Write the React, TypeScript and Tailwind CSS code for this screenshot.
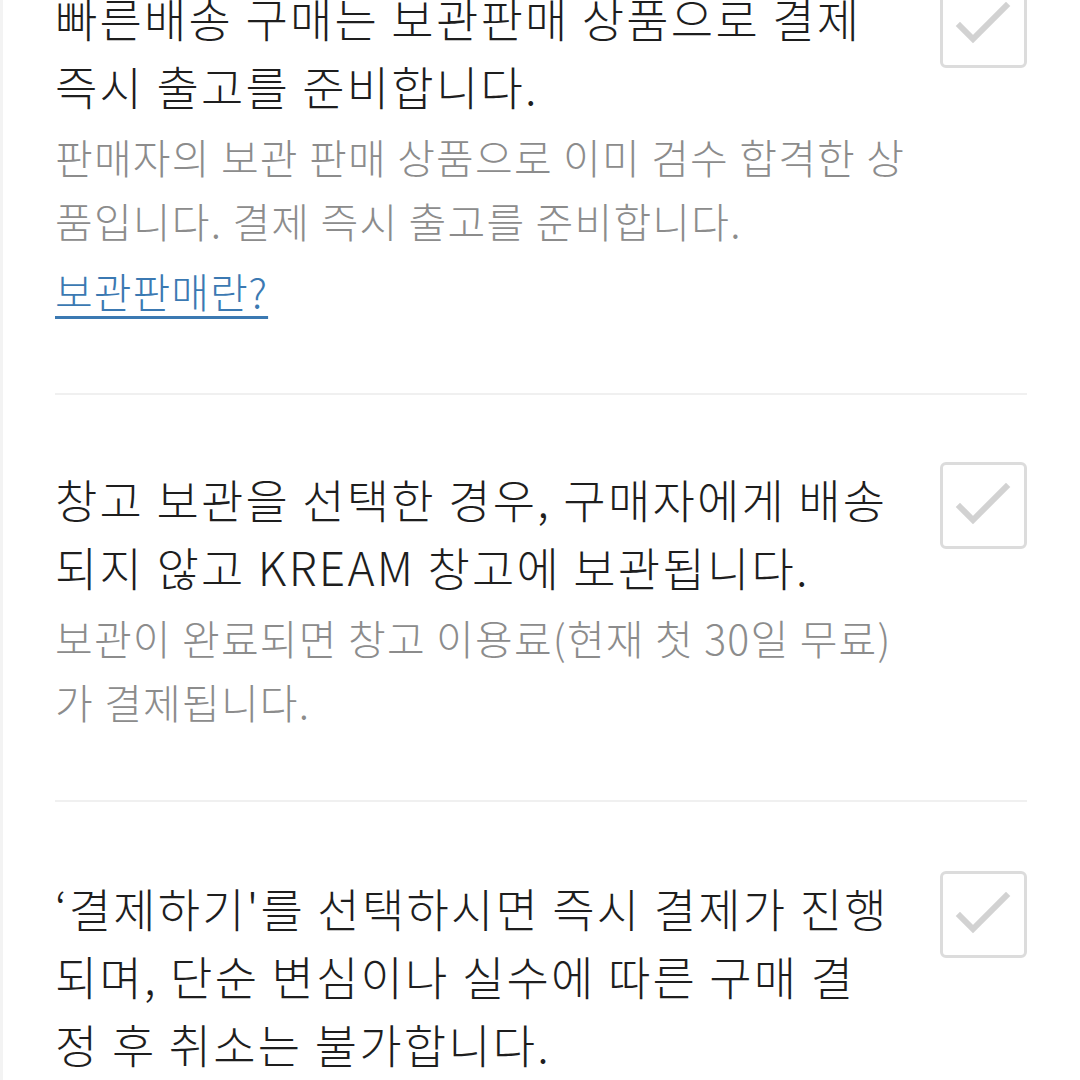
import React from 'react';

interface NoticeItemProps {
  lines: string[];
  subLines?: string[];
  link?: string;
  className?: string;
}

const CheckBox: React.FC = () => (
  <div className="w-[87px] h-[87px] shrink-0 rounded-[6px] border-[3px] border-[#dcdcdc] flex items-center justify-center">
    <svg width="87" height="87" viewBox="0 0 87 87" className="shrink-0">
      <path d="M20 45 L33 58 L66 25" fill="none" stroke="#d2d2d2" strokeWidth="6" strokeLinecap="square" />
    </svg>
  </div>
);

const NoticeItem: React.FC<NoticeItemProps> = ({ lines, subLines, link, className }) => (
  <div className={`flex items-start justify-between ${className ?? ''}`}>
    <div className="pt-[2px]">
      <p className="text-[46px] leading-[68px] text-[#1e1e1e] tracking-[2.2px] font-light">
        {lines.map((l, i) => (
          <React.Fragment key={i}>
            {l}
            {i < lines.length - 1 && <br />}
          </React.Fragment>
        ))}
      </p>
      {subLines && (
        <p className="mt-[5px] text-[41px] leading-[64px] text-[#8c8c8c] tracking-[1.2px] font-light">
          {subLines.map((l, i) => (
            <React.Fragment key={i}>
              {l}
              {i < subLines.length - 1 && <br />}
            </React.Fragment>
          ))}
        </p>
      )}
      {link && (
        <a href="#" className="block mt-[6px] text-[41px] leading-[64px] text-[#3b79b2] tracking-[1px] font-light underline underline-offset-[8px] decoration-[3px]">
          {link}
        </a>
      )}
    </div>
    <CheckBox />
  </div>
);

export default function App() {
  return (
    <div
      className="w-[1080px] h-[1080px] overflow-hidden bg-white border-l-[3px] border-[#f3f3f3]"
      style={{ fontFamily: '"Noto Sans CJK KR", "Noto Sans", sans-serif' }}
    >
      <div className="pl-[52px] pr-[53px]">
        <NoticeItem
          className="-mt-[19px] pb-[71px]"
          lines={['빠른배송 구매는 보관판매 상품으로 결제', '즉시 출고를 준비합니다.']}
          subLines={['판매자의 보관 판매 상품으로 이미 검수 합격한 상', '품입니다. 결제 즉시 출고를 준비합니다.']}
          link="보관판매란?"
        />
        <div className="h-[2px] bg-[#f0f0f0]" />
        <NoticeItem
          className="pt-[67px] pb-[67px]"
          lines={['창고 보관을 선택한 경우, 구매자에게 배송', '되지 않고 KREAM 창고에 보관됩니다.']}
          subLines={['보관이 완료되면 창고 이용료(현재 첫 30일 무료)', '가 결제됩니다.']}
        />
        <div className="h-[2px] bg-[#f0f0f0]" />
        <NoticeItem
          className="pt-[69px]"
          lines={['‘결제하기\'를 선택하시면 즉시 결제가 진행', '되며, 단순 변심이나 실수에 따른 구매 결', '정 후 취소는 불가합니다.']}
        />
      </div>
    </div>
  );
}
